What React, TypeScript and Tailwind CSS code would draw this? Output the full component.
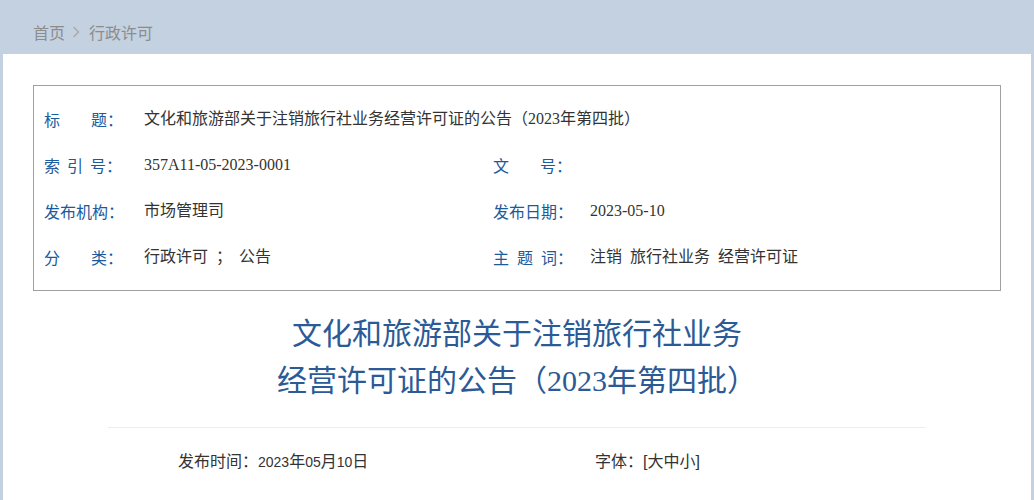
import React from "react";

const cjk = { fontFamily: '"Noto Sans CJK SC", "Noto Sans", sans-serif' };
const serifVal = { fontFamily: '"Liberation Serif", "Noto Sans CJK SC", serif' };
const sansNum = { fontFamily: '"Liberation Sans", "Noto Sans CJK SC", sans-serif' };

function Label({ chars, gap }: { chars: string[]; gap: number }) {
  return (
    <span className="text-[#1b5a9b] inline-flex items-center">
      {chars.map((c, i) => (
        <span key={i} style={i > 0 ? { marginLeft: gap } : undefined}>
          {c}
        </span>
      ))}
      <span>：</span>
    </span>
  );
}

function Num({ children }: { children: React.ReactNode }) {
  return (
    <span className="text-[14px]" style={sansNum}>
      {children}
    </span>
  );
}

export default function App() {
  return (
    <div className="min-h-[500px] bg-[#c4d1e0] px-[3px] text-[16px]" style={cjk}>
      <div className="h-[54px] pt-[22px] pl-[30px] flex items-start leading-[20px] text-[#8c8c8c]">
        <span>首页</span>
        <svg width="8" height="12" viewBox="0 0 8 12" className="ml-[7px] mr-[9px] mt-[4px]">
          <path d="M1.5 1 L6.5 6 L1.5 11" fill="none" stroke="#a8a8a8" strokeWidth="1.3" />
        </svg>
        <span>行政许可</span>
      </div>
      <div className="bg-white px-[30px] pt-[31px] pb-[40px] min-h-[446px]">
        <div className="border border-[#a0a0a0] py-[10px] pl-[10px] leading-[20px]">
          <div className="h-[46px] flex items-center">
            <div className="w-[100px] shrink-0">
              <Label chars={["标", "题"]} gap={31} />
            </div>
            <div className="text-[#333]" style={serifVal}>
              文化和旅游部关于注销旅行社业务经营许可证的公告（2023年第四批）
            </div>
          </div>
          <div className="h-[46px] flex items-center">
            <div className="w-[449px] flex items-center">
              <div className="w-[100px] shrink-0">
                <Label chars={["索", "引", "号"]} gap={7} />
              </div>
              <div className="text-[#333]" style={serifVal}>
                357A11-05-2023-0001
              </div>
            </div>
            <div className="flex items-center">
              <div className="w-[97px] shrink-0">
                <Label chars={["文", "号"]} gap={31} />
              </div>
            </div>
          </div>
          <div className="h-[46px] flex items-center">
            <div className="w-[449px] flex items-center">
              <div className="w-[100px] shrink-0">
                <Label chars={["发布机构"]} gap={0} />
              </div>
              <div className="text-[#333]" style={serifVal}>
                市场管理司
              </div>
            </div>
            <div className="flex items-center">
              <div className="w-[97px] shrink-0">
                <Label chars={["发布日期"]} gap={0} />
              </div>
              <div className="text-[#333]" style={serifVal}>
                2023-05-10
              </div>
            </div>
          </div>
          <div className="h-[46px] flex items-center">
            <div className="w-[449px] flex items-center">
              <div className="w-[100px] shrink-0">
                <Label chars={["分", "类"]} gap={31} />
              </div>
              <div className="text-[#333] flex items-center" style={serifVal}>
                <span>行政许可</span>
                <span className="ml-[8px] mr-[7px]">；</span>
                <span>公告</span>
              </div>
            </div>
            <div className="flex items-center">
              <div className="w-[97px] shrink-0">
                <Label chars={["主", "题", "词"]} gap={8} />
              </div>
              <div className="text-[#333] flex items-center" style={serifVal}>
                <span>注销</span>
                <span className="ml-[8px]">旅行社业务</span>
                <span className="ml-[8px]">经营许可证</span>
              </div>
            </div>
          </div>
        </div>

        <div className="mt-[17px] text-center text-[30px] leading-[47px] text-[#2b5a96]">
          <div>文化和旅游部关于注销旅行社业务</div>
          <div>
            经营许可证的公告（<span style={serifVal}>2023</span>年第四批）
          </div>
        </div>

        <div className="mt-[23px] mx-[75px] h-px bg-[#eeeeee]" />

        <div className="mt-[22px] flex items-center leading-[20px] text-[#333]">
          <div className="w-[562px] pl-[145px] shrink-0">
            发布时间：<Num>2023</Num>年<Num>05</Num>月<Num>10</Num>日
          </div>
          <div>
            字体：<span style={sansNum}>[</span>大中小<span style={sansNum}>]</span>
          </div>
        </div>
      </div>
    </div>
  );
}
